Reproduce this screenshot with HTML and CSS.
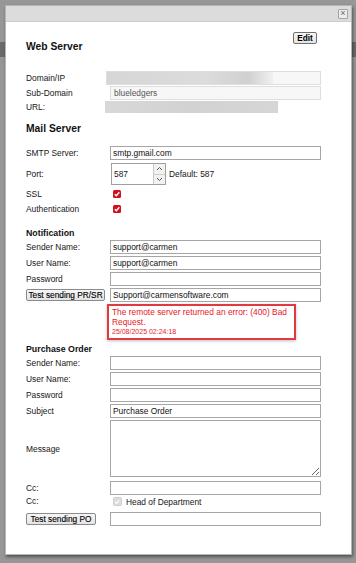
FILE: index.html
```html
<!DOCTYPE html>
<html>
<head>
<meta charset="utf-8">
<link rel="stylesheet" href="styles.css">
</head>
<body>
<div class="backdrop-band"></div>
<div class="dialog">
  <div class="titlebar"><span class="close">×</span></div>
  <div class="content">
    <div class="top-row">
      <h2 class="h-main h-first">Web Server</h2>
      <button class="btn btn-edit">Edit</button>
    </div>

    <div class="grid g-web">
      <label>Domain/IP</label>
      <div class="ro ro-domain"><span class="blur blur-domain"></span></div>
      <label>Sub-Domain</label>
      <div class="ro ro-sub">blueledgers</div>
      <label>URL:</label>
      <div class="blur blur-url"></div>
    </div>

    <h2 class="h-main h-mail">Mail Server</h2>

    <div class="grid g-mail">
      <label>SMTP Server:</label>
      <div class="inp">smtp.gmail.com</div>
      <label>Port:</label>
      <div class="port-row">
        <div class="port">
          <span class="port-val">587</span>
          <span class="spin">
            <span class="spin-btn"><svg width="7" height="5" viewBox="0 0 7 5"><path d="M1 4 L3.5 1.5 L6 4" fill="none" stroke="#555" stroke-width="1"/></svg></span>
            <span class="spin-btn"><svg width="7" height="5" viewBox="0 0 7 5"><path d="M1 1 L3.5 3.5 L6 1" fill="none" stroke="#555" stroke-width="1"/></svg></span>
          </span>
        </div>
        <span class="default">Default: 587</span>
      </div>
      <label>SSL</label>
      <div class="chk-cell"><span class="chk"><svg width="8" height="8" viewBox="0 0 8 8"><path d="M1.8 4.2 L3.3 5.8 L6.3 2.2" fill="none" stroke="#fff" stroke-width="1.4"/></svg></span></div>
      <label>Authentication</label>
      <div class="chk-cell"><span class="chk"><svg width="8" height="8" viewBox="0 0 8 8"><path d="M1.8 4.2 L3.3 5.8 L6.3 2.2" fill="none" stroke="#fff" stroke-width="1.4"/></svg></span></div>
    </div>

    <h3 class="h-sub h-notif">Notification</h3>

    <div class="grid g-notif">
      <label>Sender Name:</label>
      <div class="inp">support@carmen</div>
      <label>User Name:</label>
      <div class="inp">support@carmen</div>
      <label>Password</label>
      <div class="inp"></div>
      <div class="btn-cell"><button class="btn btn-test">Test sending PR/SR</button></div>
      <div class="inp">Support@carmensoftware.com</div>
      <div></div>
      <div class="error">
        <div class="err-msg">The remote server returned an error: (400) Bad Request.</div>
        <div class="err-date">25/08/2025 02:24:18</div>
      </div>
    </div>

    <h3 class="h-sub h-po">Purchase Order</h3>

    <div class="grid g-po">
      <label>Sender Name:</label>
      <div class="inp"></div>
      <label>User Name:</label>
      <div class="inp"></div>
      <label>Password</label>
      <div class="inp"></div>
      <label>Subject</label>
      <div class="inp">Purchase Order</div>
      <label>Message</label>
      <textarea class="msg"></textarea>
      <label class="cc1">Cc:</label>
      <div class="inp cc1"></div>
      <label>Cc:</label>
      <div class="chk-cell"><span class="chk chk-dis"><svg width="8" height="8" viewBox="0 0 8 8"><path d="M1.5 4 L3 5.5 L6 2" fill="none" stroke="#fff" stroke-width="1.3"/></svg></span><span class="hod">Head of Department</span></div>
      <div class="btn-cell po-btn"><button class="btn btn-test btn-po">Test sending PO</button></div>
      <div class="inp po-btn"></div>
    </div>
  </div>
</div>
</body>
</html>
```

FILE: styles.css
```css
html, body {
  margin: 0;
  padding: 0;
}
body {
  width: 356px;
  height: 563px;
  overflow: hidden;
  background: #979797;
  font-family: "Liberation Sans", Arial, sans-serif;
  font-size: 8.4px;
  color: #161616;
  position: relative;
}
.backdrop-band {
  position: absolute;
  left: 0;
  top: 42px;
  width: 356px;
  height: 15px;
  background: #6a6a6a;
}
.dialog {
  position: relative;
  margin: 5px 0 0 5px;
  width: 347px;
  height: 550px;
  background: #fff;
  box-shadow: 1px 2px 3px rgba(0, 0, 0, 0.45);
  border: 1px solid #b5b5b5;
  box-sizing: border-box;
}
.titlebar {
  height: 16px;
  background: #dcdcdc;
  border-bottom: 1px solid #cbcbcb;
  box-sizing: border-box;
  display: flex;
  justify-content: flex-end;
  align-items: flex-start;
  padding: 3px 3px 0 0;
}
.close {
  width: 10px;
  height: 10px;
  box-sizing: border-box;
  border: 1px solid #a4a4a4;
  background: #ececec;
  border-radius: 1px;
  font-size: 9px;
  line-height: 7px;
  text-align: center;
  color: #6a6a6a;
}
.content {
  padding: 10px 0 0 20px;
}
.top-row {
  display: flex;
  justify-content: space-between;
  align-items: flex-start;
  width: 291px;
}
h2, h3 {
  margin: 0;
  font-weight: bold;
  color: #111;
}
.h-main {
  font-size: 10.3px;
  line-height: 12px;
}
.h-first {
  margin-top: 9px;
}
.h-sub {
  font-size: 8.8px;
  line-height: 11px;
}
.btn {
  font-family: "Liberation Sans", Arial, sans-serif;
  font-size: 8.3px;
  color: #000;
  -webkit-text-stroke: 0.12px #000;
  background: linear-gradient(#f6f6f6, #e4e4e4);
  border: 1px solid #8a8a8a;
  border-radius: 2px;
  padding: 0;
  height: 12px;
  line-height: 10px;
  box-sizing: border-box;
  white-space: nowrap;
}
.btn-edit {
  width: 24px;
  font-weight: bold;
  -webkit-text-stroke: 0;
  border-color: #6f6f6f;
}
.grid {
  display: grid;
  grid-template-columns: 84px 211px;
  align-items: center;
}
label {
  display: block;
  white-space: nowrap;
}
.g-web {
  margin-top: 18px;
  row-gap: 1px;
  grid-template-rows: 14px 14px 12px;
}
.ro {
  height: 14px;
  box-sizing: border-box;
  border: 1px solid #dedede;
  background: #f7f7f7;
}
.ro-domain {
  margin-left: -4px;
  width: 215px;
  position: relative;
  overflow: hidden;
}
.blur-domain {
  display: block;
  width: 166px;
  height: 12px;
  background: linear-gradient(90deg, #d6d6d6 0%, #dcdcdc 60%, #d0d0d0 85%, #f0f0f0 100%);
}
.ro-sub {
  color: #555;
  padding-left: 3px;
  line-height: 12px;
}
.blur-url {
  margin-left: -5px;
  width: 173px;
  height: 12px;
  background: linear-gradient(90deg, #d8d8d8, #d2d2d2 50%, #d6d6d6);
}
.h-mail {
  margin-top: 10px;
}
.g-mail {
  margin-top: 11px;
  row-gap: 3px;
  grid-template-rows: 14px 22px 12px 12px;
}
.inp {
  height: 14px;
  box-sizing: border-box;
  border: 1px solid #a6a6a6;
  background: #fff;
  padding-left: 2px;
  line-height: 12px;
  color: #111;
  white-space: nowrap;
}
.port-row {
  display: flex;
  align-items: center;
  height: 22px;
}
.port {
  margin-left: 1px;
  width: 55px;
  height: 22px;
  box-sizing: border-box;
  border: 1px solid #a0a0a0;
  display: flex;
  justify-content: space-between;
}
.port-val {
  padding-left: 2px;
  line-height: 20px;
}
.spin {
  display: flex;
  flex-direction: column;
  width: 11px;
  border-left: 1px solid #c8c8c8;
}
.spin-btn {
  flex: 1;
  display: flex;
  align-items: center;
  justify-content: center;
  background: #f2f2f2;
}
.spin-btn + .spin-btn {
  border-top: 1px solid #d0d0d0;
}
.default {
  margin-left: 3px;
}
.chk-cell {
  display: flex;
  align-items: center;
  height: 12px;
}
.chk {
  margin-left: 3px;
  width: 8px;
  height: 8px;
  border-radius: 1.5px;
  background: #d0101e;
  display: flex;
}
.chk-dis {
  background: #dcdcdc;
  border: 1px solid #cfcfcf;
  box-sizing: border-box;
  width: 9px;
  height: 9px;
}
.hod {
  margin-left: 4px;
  margin-top: 2px;
}
.h-notif {
  margin-top: 13px;
}
.g-notif {
  margin-top: 1px;
  row-gap: 2px;
  grid-template-rows: 14px 14px 14px 14px auto;
}
.g-notif .inp {
  width: 211px;
}
.btn-cell {
  display: flex;
  align-items: center;
}
.btn-test {
  width: 79px;
}
.btn-po {
  width: 70px;
}
.error {
  margin-left: -3px;
  width: 189px;
  height: 36px;
  box-sizing: border-box;
  border: 2px solid #e0393f;
  box-shadow: 0 1px 3px rgba(0, 0, 0, 0.25);
  padding: 1px 0 0 3px;
  color: #e8202a;
}
.err-msg {
  line-height: 10px;
  width: 180px;
}
.err-date {
  font-size: 7px;
  line-height: 10px;
}
.h-po {
  margin-top: 4px;
}
.g-po {
  margin-top: 1px;
  row-gap: 2px;
  grid-template-rows: 14px 14px 14px 14px 57px 14px 12px 14px;
}
.msg {
  width: 211px;
  height: 57px;
  box-sizing: border-box;
  border: 1px solid #a6a6a6;
  margin: 0;
  padding: 0;
  resize: both;
}
.cc1 {
  margin-top: 4px;
}
.po-btn {
  margin-top: 6px;
}
```
